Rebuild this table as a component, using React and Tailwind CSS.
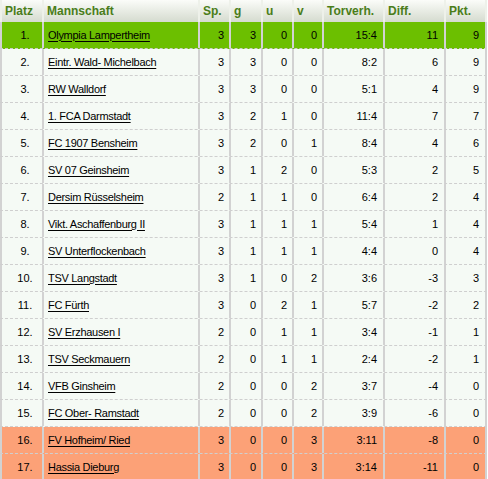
// App.jsx - league standings table
const COLS = [
  { key: 'platz', label: 'Platz', w: 'w-[42px]', align: 'text-center pl-[6px]' },
  { key: 'team', label: 'Mannschaft', w: 'w-[156px]', align: 'text-left pl-[4px]' },
  { key: 'sp', label: 'Sp.', w: 'w-[31px]', align: 'text-right pr-[5px]' },
  { key: 'g', label: 'g', w: 'w-[32px]', align: 'text-right pr-[5px]' },
  { key: 'u', label: 'u', w: 'w-[31px]', align: 'text-right pr-[5px]' },
  { key: 'v', label: 'v', w: 'w-[30px]', align: 'text-right pr-[5px]' },
  { key: 'tore', label: 'Torverh.', w: 'w-[61px]', align: 'text-right pr-[6px]' },
  { key: 'diff', label: 'Diff.', w: 'w-[61px]', align: 'text-right pr-[6px]' },
  { key: 'pkt', label: 'Pkt.', w: 'w-[41px]', align: 'text-right pr-[6px]' },
];

const ROWS = [
  ['1.', 'Olympia Lampertheim', 3, 3, 0, 0, '15:4', 11, 9],
  ['2.', 'Eintr. Wald- Michelbach', 3, 3, 0, 0, '8:2', 6, 9],
  ['3.', 'RW Walldorf', 3, 3, 0, 0, '5:1', 4, 9],
  ['4.', '1. FCA Darmstadt', 3, 2, 1, 0, '11:4', 7, 7],
  ['5.', 'FC 1907 Bensheim', 3, 2, 0, 1, '8:4', 4, 6],
  ['6.', 'SV 07 Geinsheim', 3, 1, 2, 0, '5:3', 2, 5],
  ['7.', 'Dersim Rüsselsheim', 2, 1, 1, 0, '6:4', 2, 4],
  ['8.', 'Vikt. Aschaffenburg II', 3, 1, 1, 1, '5:4', 1, 4],
  ['9.', 'SV Unterflockenbach', 3, 1, 1, 1, '4:4', 0, 4],
  ['10.', 'TSV Langstadt', 3, 1, 0, 2, '3:6', -3, 3],
  ['11.', 'FC Fürth', 3, 0, 2, 1, '5:7', -2, 2],
  ['12.', 'SV Erzhausen I', 2, 0, 1, 1, '3:4', -1, 1],
  ['13.', 'TSV Seckmauern', 2, 0, 1, 1, '2:4', -2, 1],
  ['14.', 'VFB Ginsheim', 2, 0, 0, 2, '3:7', -4, 0],
  ['15.', 'FC Ober- Ramstadt', 2, 0, 0, 2, '3:9', -6, 0],
  ['16.', 'FV Hofheim/ Ried', 3, 0, 0, 3, '3:11', -8, 0],
  ['17.', 'Hassia Dieburg', 3, 0, 0, 3, '3:14', -11, 0],
];

const rowBg = (i) => {
  if (i === 0) return 'bg-[#6cbf00]';
  if (i >= 15) return 'bg-[#fca177]';
  return 'bg-[#f5faf5]';
};

export default function App() {
  return (
    <div className="w-[488px] h-[479px] overflow-hidden bg-white font-['Liberation_Sans',Arial,sans-serif] text-[11px] text-black">
      {/* header */}
      <div className="flex h-[22px] bg-gradient-to-b from-[#fbfcf9] to-[#d5dbcf] border-r-2 border-[#eef1ea] w-[487px]">
        {COLS.map((c) => (
          <div
            key={c.key}
            className={`${c.w} shrink-0 border-l-2 border-[#eef1ea] pl-[3px] flex items-center text-[12px] font-bold text-[#4a7d1a]`}
          >
            {c.label}
          </div>
        ))}
      </div>

      {ROWS.map((r, i) => (
        <div
          key={r[0]}
          className={`flex h-[27px] w-[487px] border-b border-dashed border-[#cfcfcf] border-r-2 ${rowBg(i)}`}
          style={{ borderRightStyle: 'solid', borderRightColor: '#d2d2d2' }}
        >
          {COLS.map((c, j) => (
            <div
              key={c.key}
              className={`${c.w} shrink-0 border-l-2 border-[#d2d2d2] flex items-center ${c.align} ${j === 1 ? 'justify-start' : j === 0 ? 'justify-center' : 'justify-end'}`}
            >
              {j === 1 ? (
                <a href="#" className="underline underline-offset-2 text-black tracking-[-0.3px]">
                  {r[j]}
                </a>
              ) : (
                r[j]
              )}
            </div>
          ))}
        </div>
      ))}
    </div>
  );
}
